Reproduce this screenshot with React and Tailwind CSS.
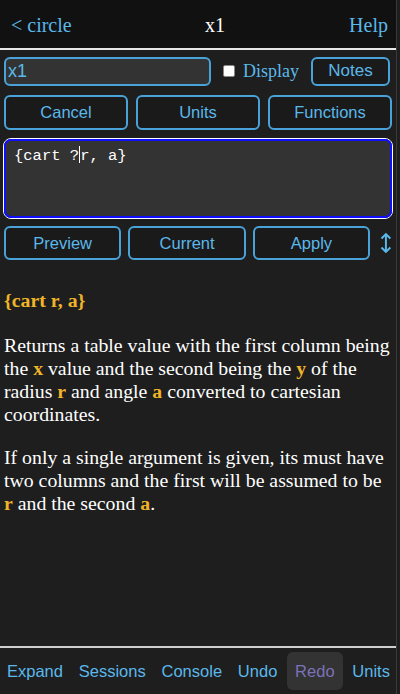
import React from "react";

const serif = { fontFamily: '"Liberation Serif", "Times New Roman", serif' };

function Btn({ children, className = "" }) {
  return (
    <div
      className={
        "flex items-center justify-center rounded-md border-2 border-[#4aa3d8] bg-[#1a1a1a] text-[#5ab8ea] text-[16.5px] " +
        className
      }
      style={{ fontFamily: '"Liberation Sans", Arial, sans-serif' }}
    >
      {children}
    </div>
  );
}

const O = ({ children }) => (
  <b className="text-[#f0b429]">{children}</b>
);

export default function App() {
  return (
    <div className="w-[400px] h-[694px] bg-[#1e1e1e] flex">
      <div className="w-[397px] h-full flex flex-col border-r border-[#3a3a3a]">
        <div
          className="h-[48px] bg-[#111111] flex items-center justify-between px-[11px] pt-[2px] text-[20px]"
          style={serif}
        >
          <span className="text-[#5ab8ea]">&lt; circle</span>
          <span className="text-white ml-[9px]">x1</span>
          <span className="text-[#5ab8ea] mr-[-3px]">Help</span>
        </div>
        <div className="h-[2px] bg-[#e8e8e8]" />
        <div className="flex items-center mt-[7px] px-[4px] h-[28px]">
          <div
            className="w-[207px] h-[29px] rounded-md border-2 border-[#4aa3d8] bg-[#333333] text-[#5ab8ea] text-[18px] flex items-center pl-[2px]"
            style={{ fontFamily: '"Liberation Sans", Arial, sans-serif' }}
          >
            x1
          </div>
          <div className="ml-[12px] w-[12px] h-[12px] rounded-[2px] bg-white border border-[#888]" />
          <span className="ml-[8px] text-[#5ab8ea] text-[18px]" style={serif}>
            Display
          </span>
          <Btn className="ml-[12px] w-[79px] h-[29px] text-[17px]">Notes</Btn>
        </div>
        <div className="flex gap-[8px] px-[4px] mt-[10px]">
          <Btn className="w-[125px] h-[35px]">Cancel</Btn>
          <Btn className="w-[125px] h-[35px]">Units</Btn>
          <Btn className="w-[125px] h-[35px]">Functions</Btn>
        </div>
        <div className="mx-[3px] mt-[8px] h-[81px] rounded-[8px] border border-white p-0">
          <div
            className="h-full rounded-[7px] border-2 border-[#1010ff] bg-[#333333] text-white text-[15.5px] px-[8px] pt-[4px]"
            style={{ fontFamily: '"Liberation Mono", "Courier New", monospace' }}
          >
            {"{cart ?"}
            <span className="inline-block w-[1px] h-[17px] bg-white align-[-3px]" />
            {"r, a}"}
          </div>
        </div>
        <div className="flex items-center gap-[7px] px-[4px] mt-[7px]">
          <Btn className="w-[119px] h-[34px]">Preview</Btn>
          <Btn className="w-[119px] h-[34px]">Current</Btn>
          <Btn className="w-[119px] h-[34px]">Apply</Btn>
          <svg width="12" height="22" viewBox="0 0 12 22" className="ml-[3px]">
            <path d="M6 2 V20" stroke="#5ab8ea" strokeWidth="2" />
            <path d="M1.5 6.5 L6 2 L10.5 6.5" fill="none" stroke="#5ab8ea" strokeWidth="2" />
            <path d="M1.5 15.5 L6 20 L10.5 15.5" fill="none" stroke="#5ab8ea" strokeWidth="2" />
          </svg>
        </div>
        <div className="px-[4px] mt-[29px] text-[19.8px] leading-[23px] text-white" style={serif}>
          <div className="font-bold text-[#f0b429]">{"{cart r, a}"}</div>
          <p className="mt-[22px]">
            Returns a table value with the first column being the <O>x</O> value and the second being the <O>y</O> of the radius <O>r</O> and angle <O>a</O> converted to cartesian coordinates.
          </p>
          <p className="mt-[20px]">
            If only a single argument is given, its must have two columns and the first will be assumed to be <O>r</O> and the second <O>a</O>.
          </p>
        </div>
        <div className="flex-1" />
        <div className="h-[2px] bg-[#cfcfcf]" />
        <div
          className="h-[46px] flex items-center justify-between pl-[7px] pr-[6px] text-[16.5px] text-[#5ab8ea]"
          style={{ fontFamily: '"Liberation Sans", Arial, sans-serif' }}
        >
          <span>Expand</span>
          <span>Sessions</span>
          <span>Console</span>
          <span>Undo</span>
          <span className="bg-[#333333] text-[#7a72b8] rounded-md px-[8px] py-[7px] -mx-[6px]">Redo</span>
          <span>Units</span>
        </div>
      </div>
    </div>
  );
}
